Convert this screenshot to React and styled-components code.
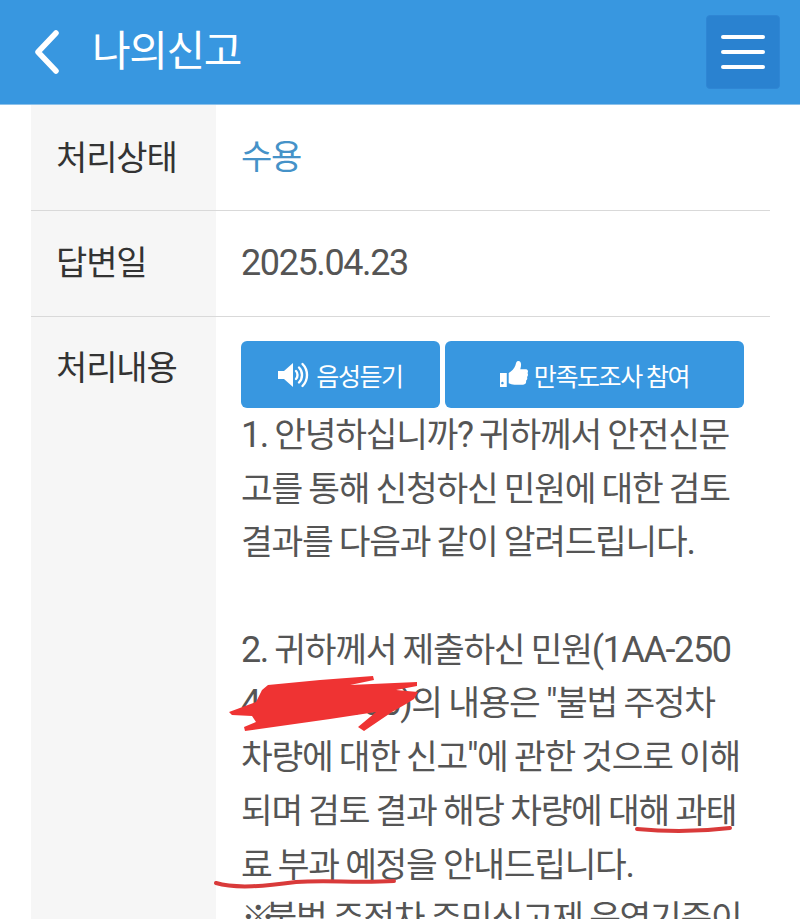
import React from 'react'
import styled, { createGlobalStyle } from 'styled-components'

const GlobalStyle = createGlobalStyle`
  html, body {
    margin: 0;
    padding: 0;
    background: #fff;
    font-family: "Noto Sans CJK KR", "Noto Sans", sans-serif;
  }
`

const Page = styled.div`
  position: relative;
  width: 800px;
  height: 919px;
  overflow: hidden;
  background: #fff;
`

const Header = styled.header`
  display: flex;
  align-items: center;
  height: 104px;
  padding: 0 20px 0 32px;
  background: #3897e0;
  border-bottom: 1px solid #8cc1ea;
`

const BackButton = styled.svg`
  width: 30px;
  height: 44px;
  margin-right: 30px;
`

const Title = styled.h1`
  flex: 1;
  margin: 0;
  color: #fff;
  font-size: 42px;
  font-weight: 400;
  letter-spacing: -1.4px;
  line-height: 1;
  position: relative;
  top: -4px;
`

const MenuButton = styled.button`
  display: flex;
  flex-direction: column;
  justify-content: center;
  gap: 11px;
  width: 74px;
  height: 74px;
  padding: 0 14px;
  margin-top: -1px;
  background: #2a82d0;
  border: 1px solid #2f86d4;
  border-radius: 4px;
`

const MenuBar = styled.span`
  display: block;
  height: 4px;
  background: #fff;
  border-radius: 2px;
`

const Table = styled.div`
  margin: 0 30px 0 31px;
`

const Row = styled.div`
  display: flex;
  min-height: ${(p) => p.$height || 'auto'};
  border-bottom: ${(p) => (p.$last ? 'none' : '1px solid #d9d9d9')};
`

const Label = styled.div`
  flex: 0 0 185px;
  box-sizing: border-box;
  padding: ${(p) => p.$top || '26px'} 0 0 25px;
  background: #f6f6f6;
  color: #333;
  font-size: 34px;
  letter-spacing: -1.1px;
  line-height: 50px;
`

const Value = styled.div`
  flex: 1;
  padding: 25px 0 0 25px;
  color: ${(p) => p.$color || '#555'};
  font-size: 34px;
  letter-spacing: -1.2px;
  line-height: 50px;
`

const Content = styled.div`
  flex: 1;
  padding: 24px 0 0 25px;
`

const Buttons = styled.div`
  display: flex;
  gap: 5px;
  margin-bottom: 6px;
`

const ActionButton = styled.button`
  display: flex;
  align-items: center;
  justify-content: center;
  gap: ${(p) => p.$gap || '6px'};
  width: ${(p) => p.$width};
  height: 67px;
  padding: 0;
  background: #3897e0;
  border: none;
  border-radius: 6px;
  color: #fff;
  font-family: inherit;
  font-size: 25px;
  letter-spacing: -1.4px;
`

const Body = styled.div`
  color: #555;
  font-size: 34.5px;
  letter-spacing: -1.3px;
`

const Line = styled.div`
  height: 53.7px;
  line-height: 36px;
  white-space: nowrap;
`

const Latin = styled.span`
  font-family: Roboto, sans-serif;
  font-size: 36px;
  letter-spacing: -1.4px;
  line-height: 1;
`

const Mark = styled.span`
  letter-spacing: -10px;
`

const Scribble = styled.svg`
  position: absolute;
  top: 0;
  left: 0;
  width: 800px;
  height: 919px;
  pointer-events: none;
`

const SpeakerIcon = () => (
  <svg width="32" height="26" viewBox="0 0 32 26" fill="none">
    <path d="M0 9h6l9-8v24l-9-8H0z" fill="#fff" />
    <path d="M18 9c2 2 2 6 0 8M21 5.5c4 4 4 11 0 15M24.500 2c6 6 6 16 0 22" stroke="#fff" strokeWidth="2.400" strokeLinecap="round" />
  </svg>
)

const ThumbIcon = () => (
  <svg width="28" height="28" viewBox="0 0 29 29">
    <path fillRule="evenodd" d="M0 12.500h7V27H0zM2.500 21.500a1.300 1.300 0 1 0 .01 0z" fill="#fff" />
    <path d="M9 12.500c3-1.500 6-5 7-8 .6-2.500 1-4.500 3-4.500 3 0 3.500 3.500 2 8.500h6c2 0 2.500 2.500 1.500 4 .8 1.500.6 3-.5 4 .6 1.500.3 3-1 4 .4 2-.6 4-3 4h-9c-2.500 0-4-1-6-1.500z" fill="#fff" />
  </svg>
)

// latin runs use Roboto, the rest stays in the korean font
const renderLine = (line) =>
  line.split(/(※|[0-9A-Za-z.\-?"()]+)/).map((part, i) => {
    if (part === '※') return <Mark key={i}>{part}</Mark>
    if (i % 2 === 1) return <Latin key={i}>{part}</Latin>
    return part
  })

const BODY_LINES = [
  '1. 안녕하십니까? 귀하께서 안전신문',
  '고를 통해 신청하신 민원에 대한 검토',
  '결과를 다음과 같이 알려드립니다.',
  '\u00a0',
  '2. 귀하께서 제출하신 민원(1AA-250',
  '4-0000000)의 내용은 "불법 주정차',
  '차량에 대한 신고"에 관한 것으로 이해',
  '되며 검토 결과 해당 차량에 대해 과태',
  '료 부과 예정을 안내드립니다.',
  '※불법 주정차 주민신고제 운영기준이',
]

const App = () => (
  <Page>
    <GlobalStyle />
    <Header>
      <BackButton viewBox="0 0 30 44" fill="none">
        <path d="M24 3 6 22l18 19" stroke="#fff" strokeWidth="5.500" strokeLinecap="round" strokeLinejoin="round" />
      </BackButton>
      <Title>나의신고</Title>
      <MenuButton aria-label="메뉴">
        <MenuBar />
        <MenuBar />
        <MenuBar />
      </MenuButton>
    </Header>
    <Table>
      <Row $height="105px">
        <Label>처리상태</Label>
        <Value $color="#4592c8">수용</Value>
      </Row>
      <Row $height="105px">
        <Label $top="25px">답변일</Label>
        <Value>
          <Latin>2025.04.23</Latin>
        </Value>
      </Row>
      <Row $last>
        <Label $top="24px">처리내용</Label>
        <Content>
          <Buttons>
            <ActionButton $width="199px">
              <SpeakerIcon />
              음성듣기
            </ActionButton>
            <ActionButton $width="299px">
              <ThumbIcon />
              만족도조사 참여
            </ActionButton>
          </Buttons>
          <Body>
            {BODY_LINES.map((line, i) => (
              <Line key={i}>{renderLine(line)}</Line>
            ))}
          </Body>
        </Content>
      </Row>
    </Table>
    <Scribble viewBox="0 0 800 919" fill="none">
      <path d="M229 712 256 702 262 690 268 685 320 680 373 676 374 680 350 685 417 682 417 686 396 690 418 692 414 699 406 704 392 712 364 731 358 727 376 712 330 719 245 731 244 727 256 722 252 716 232 715z" fill="#ef3333" />
      <path d="M637 829c30 3 60 3 93-1" stroke="#d93a3a" strokeWidth="4" strokeLinecap="round" />
      <path d="M216 883c20 6 50 3 80-1 30-2 60 1 98-1" stroke="#d93a3a" strokeWidth="4" strokeLinecap="round" />
    </Scribble>
  </Page>
)

export default App
